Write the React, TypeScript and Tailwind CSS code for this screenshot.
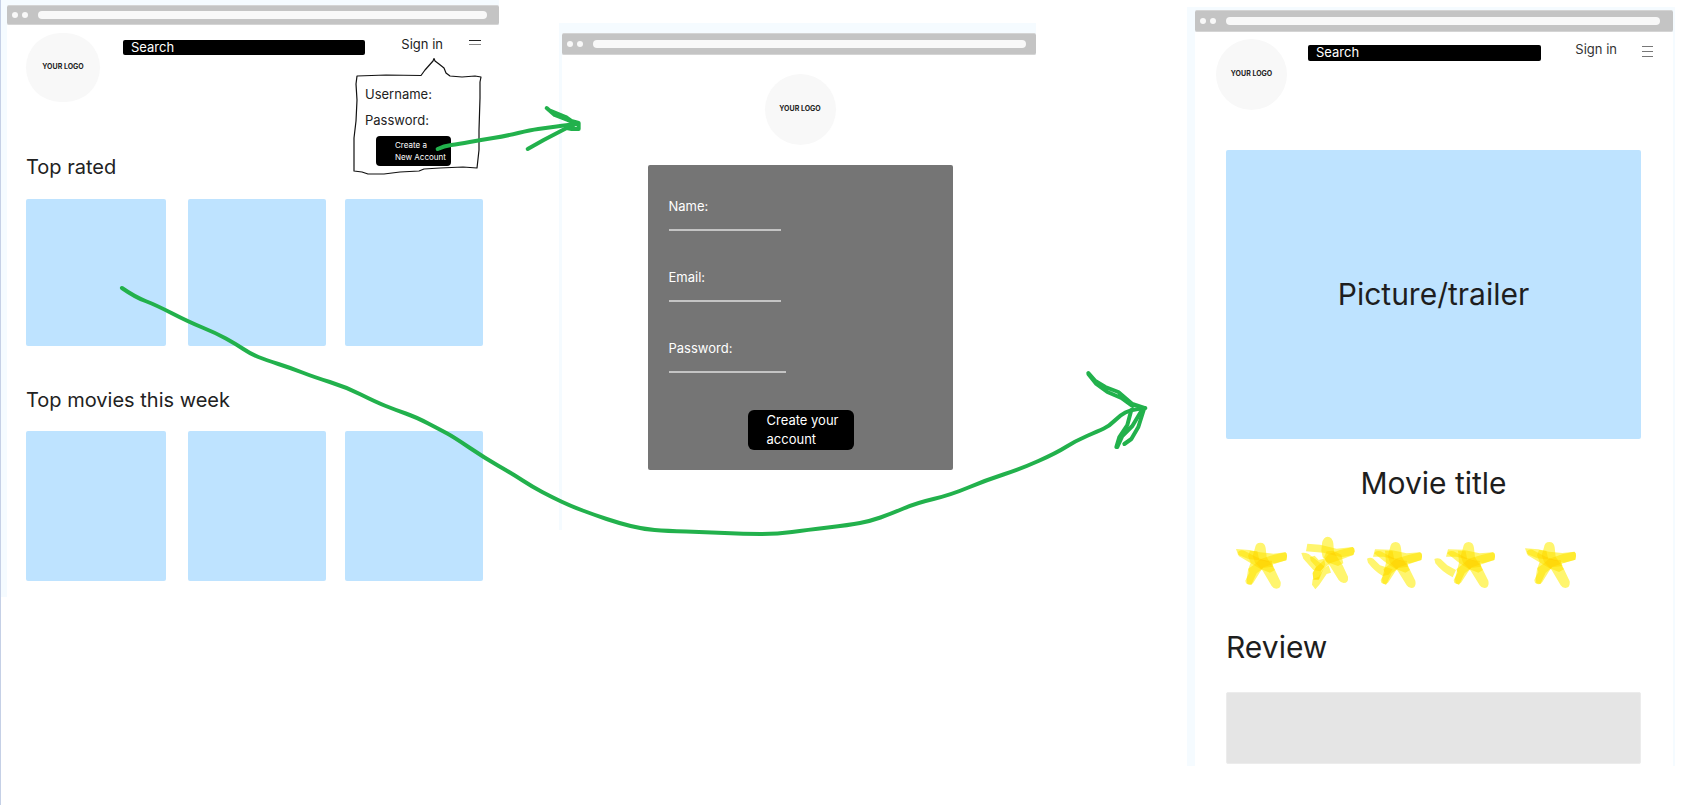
import React from "react";

const tile = "block rounded-xs bg-[#bee3ff]";

function BrowserBar({ className }: { className: string }) {
  return (
    <div className={`flex items-center rounded-xs border-y border-[#d4d4d4] bg-[#c4c4c4] ${className}`}>
      <span className="mr-1 size-1.5 rounded-full bg-[#f8f8f8]" />
      <span className="size-1.5 rounded-full bg-[#f8f8f8]" />
      <span className="ml-2.5 h-2 grow rounded-full bg-[#f8f8f8]" />
    </div>
  );
}

function Logo({ className }: { className: string }) {
  return (
    <a
      href="#home"
      className={`flex shrink-0 items-center justify-center rounded-full bg-[#f8f8f8] text-[7px] font-bold whitespace-nowrap text-[#222] ${className}`}
    >
      YOUR LOGO
    </a>
  );
}

function SignInBubble() {
  return (
    <div className="absolute top-8 right-4 h-[118px] w-[130px] pt-6 pl-3">
      <svg
        viewBox="353 57 130 118"
        className="pointer-events-none absolute inset-0 size-full"
        fill="none"
        stroke="#111"
        strokeWidth="1.2"
        strokeLinejoin="round"
      >
        <path d="M357 76L386 75L421 75.500L425 70L433 61L434 58.500L435 61L439 64L444 68L446 73L450 76L462 77L475 76L481 77L480 82L480 98L479 130L479 150L477 168L463 167L440 168L424 169L419 171L400 172L384 174L368 174L362 172L354 171L354 160L354 138L356 121L357 100L356 84Z" />
      </svg>
      <form className="relative text-[13px] leading-[26px] text-[#222]">
        <div className="flex">
          <label htmlFor="username">Username:</label>
          <input id="username" className="w-8 outline-none" />
        </div>
        <div className="flex">
          <label htmlFor="password">Password:</label>
          <input id="password" type="password" className="w-8 outline-none" />
        </div>
        <button
          type="button"
          className="mt-[3px] ml-[11px] block h-[30px] w-[75px] rounded-sm bg-black pl-[19px] text-left text-[8px] leading-[12px] whitespace-nowrap text-white"
        >
          Create a
          <br />
          New Account
        </button>
      </form>
    </div>
  );
}

function HomeFrame() {
  return (
    <section className="col-start-1 bg-[#f5fbff] pt-[5px] pl-1.5">
      <BrowserBar className="h-5 pr-3 pl-[5px]" />
      <div className="relative h-[572px] bg-white pr-4 pl-[19px]">
        <header className="flex h-[120px] items-start pt-2">
          <Logo className="h-[69px] w-[74px]" />
          <input
            aria-label="Search"
            placeholder="Search"
            className="mt-[7px] ml-[23px] h-[15px] min-w-0 grow rounded-xs bg-black px-2 text-[13px] leading-[15px] text-white placeholder:text-white"
          />
          <button className="mt-1 ml-9 text-[13px] leading-[14px] text-[#222]">Sign in</button>
          <button aria-label="Menu" className="mt-[7px] mr-0.5 ml-[26px] flex w-3 flex-col gap-[3px]">
            <span className="h-px w-full bg-[#222]" />
            <span className="h-px w-full bg-[#888]" />
          </button>
        </header>
        <SignInBubble />
        <h2 className="h-[54px] pt-[9px] text-[20px] leading-[26px] text-[#222]">Top rated</h2>
        <div className="grid h-[147px] grid-cols-[140fr_22fr_138fr_19fr_138fr]">
          <a href="#movie" aria-label="Top rated 1" className={tile} />
          <a href="#movie" aria-label="Top rated 2" className={`col-start-3 ${tile}`} />
          <a href="#movie" aria-label="Top rated 3" className={`col-start-5 ${tile}`} />
        </div>
        <h2 className="h-[85px] pt-[41px] text-[20px] leading-[26px] text-[#222]">Top movies this week</h2>
        <div className="grid h-[150px] grid-cols-[140fr_22fr_138fr_19fr_138fr]">
          <a href="#movie" aria-label="This week 1" className={tile} />
          <a href="#movie" aria-label="This week 2" className={`col-start-3 ${tile}`} />
          <a href="#movie" aria-label="This week 3" className={`col-start-5 ${tile}`} />
        </div>
      </div>
    </section>
  );
}

function Field({ id, label, type, width }: { id: string; label: string; type: string; width: string }) {
  return (
    <div className="h-[71px]">
      <label htmlFor={id} className="block text-[13px] leading-[18px]">
        {label}
      </label>
      <input id={id} type={type} className={`block h-4 border-b-2 border-[#c4c4c4] outline-none ${width}`} />
    </div>
  );
}

function SignUpFrame() {
  return (
    <section className="col-start-3 mt-[23px] bg-[#f5fbff] pt-2.5 pl-[3px]">
      <BrowserBar className="h-[22px] pr-2.5 pl-[5px]" />
      <div className="h-[475px] bg-white pt-[19px] pl-0.5">
        <Logo className="mx-auto size-[71px]" />
        <form className="mx-auto mt-5 h-[305px] w-[305px] rounded-xs bg-[#757575] pt-8 pl-[21px] text-white">
          <Field id="name" label="Name:" type="text" width="w-28" />
          <Field id="email" label="Email:" type="email" width="w-28" />
          <Field id="new-password" label="Password:" type="password" width="w-[117px]" />
          <button
            type="button"
            className="ml-[79px] block h-10 w-[106px] rounded-md bg-black pl-[19px] text-left text-[13px] leading-[19px] text-white"
          >
            Create your
            <br />
            account
          </button>
        </form>
      </div>
    </section>
  );
}

function PlainStar() {
  return (
    <>
      <path d="M78 87L118 90L150 97L190 101L226 97Q232 100 231 110L229 121L195 130L160 122L115 117L84 104Z" />
      <path d="M135 84Q137 68 151 68Q165 68 167 84L170 112L195 150L212 186Q214 206 199 206Q190 206 185 198L158 152L135 128L128 108Z" />
      <path d="M226 97Q232 100 231 110L229 121L195 131L160 142L150 156L130 188Q122 200 108 190L106 182L118 158L115 146L135 132L150 118L192 104Z" />
      <path d="M84 96Q92 86 106 94L140 112L185 128L195 150L180 158L150 146L120 128L86 108Z" />
      <path d="M120 92L142 94L148 120L185 122L190 140L160 144L140 160L124 194L112 192L110 176L114 150L122 128L114 108Z" />
    </>
  );
}

function DetachedArmStar() {
  return (
    <>
      <path d="M495 88L540 89L590 100L630 97Q637 100 636 110L634 120L600 130L560 120L520 110L489 110Z" />
      <path d="M540 84Q542 66 557 66Q571 66 573 84L576 112L600 150L616 182Q620 204 604 204Q595 204 590 196L563 152L540 128L533 108Z" />
      <path d="M630 97Q637 100 636 110L634 120L600 131L566 142L555 156L534 188Q526 196 514 188L512 180L524 158L520 148L540 132L556 116L598 104Z" />
      <path d="M492 100Q498 90 512 94L546 112L590 128L600 150L586 158L556 146L530 130Z" />
      <path d="M525 92L548 94L553 120L590 122L595 140L565 144L545 160L528 195L518 190L516 176L520 160L528 128Z" />
    </>
  );
}

function Stars() {
  return (
    <svg
      role="img"
      aria-label="Five stars"
      viewBox="48 30 1245 180"
      preserveAspectRatio="xMinYMid meet"
      className="isolate block h-[60px] w-full [&_path]:mix-blend-multiply"
      fill="#fff56e"
    >
      <PlainStar />
      <path d="M292 71L330 74L380 86L428 81Q434 84 434 94L430 105L395 112L340 98L288 94Z" />
      <path d="M336 70Q340 50 353 50Q367 51 370 70L372 96L398 136L414 170Q416 189 401 189Q392 188 386 180L360 138L338 112L334 92Z" />
      <path d="M428 81Q434 84 434 94L430 105L396 118L360 130L340 148L328 178L310 180L308 160L318 142L340 122L356 102L390 90Z" />
      <path d="M274 99Q284 97 296 102L330 128L344 140L330 154L310 150L280 116Z" />
      <path d="M300 112L314 107L326 120L342 116L346 134L334 152L326 180L310 178L308 158L318 140L302 122Z" />
      <path d="M308 178L326 170L340 146L356 136L363 158L350 162L328 194L316 208L306 194Z" />
      <path d="M350 94L370 92L394 104L400 130L384 138L350 126L342 112Z" />
      <DetachedArmStar />
      <path d="M471 116Q480 111 490 116L510 136L548 148L536 164L518 168Q492 152 474 128Z" />
      <g transform="translate(219 0)">
        <DetachedArmStar />
      </g>
      <path d="M673 117Q682 112 692 117L712 136L738 150L728 172Q696 156 676 130Z" />
      <g transform="translate(867 -2)">
        <PlainStar />
      </g>
    </svg>
  );
}

function MovieFrame() {
  return (
    <section className="col-start-5 mt-[7px] bg-[#f5fbff] pt-[3px] pr-0.5 pl-2">
      <BrowserBar className="h-[22px] pr-[13px] pl-[5px]" />
      <div className="h-[734px] bg-white pr-8 pl-[21px] text-[#1e1e1e]">
        <header className="-mr-3 flex h-[118px] items-start pt-[7px]">
          <Logo className="size-[71px]" />
          <input
            aria-label="Search movies"
            placeholder="Search"
            className="mt-1.5 ml-[21px] h-4 min-w-0 grow rounded-xs bg-black px-2 pb-0.5 text-[13px] leading-[14px] text-white placeholder:text-white"
          />
          <button className="mt-[3px] ml-[34px] text-[13px] leading-[14px] text-[#333]">Sign in</button>
          <button aria-label="Menu" className="mt-[7px] ml-[25px] flex w-[11px] flex-col gap-1">
            <span className="h-px w-full bg-[#777]" />
            <span className="h-px w-full bg-[#777]" />
            <span className="h-px w-full bg-[#777]" />
          </button>
        </header>
        <div className="pl-2.5">
          <div className="flex h-[289px] items-center justify-center rounded-xs bg-[#bee3ff] text-[30px]">
            Picture/trailer
          </div>
          <h1 className="mt-6 text-center text-[30px] leading-10">Movie title</h1>
          <div className="mt-[27px]">
            <Stars />
          </div>
          <label htmlFor="review" className="mt-[37px] block text-[30px] leading-10">
            Review
          </label>
          <textarea
            id="review"
            className="mt-[25px] block h-[72px] w-full resize-none rounded-xs border border-[#ececec] bg-[#e5e5e5] outline-none"
          />
        </div>
      </div>
    </section>
  );
}

type Point = [number, number];

/** Joins the points into one pen stroke, rounding each corner through the segment midpoints. */
function penStroke(points: Point[]): string {
  const [first, ...rest] = points;
  let d = `M${first[0]} ${first[1]}`;
  rest.forEach(([x, y], i) => {
    const next = rest[i + 1];
    d += next ? `Q${x} ${y} ${(x + next[0]) / 2} ${(y + next[1]) / 2}` : `L${x} ${y}`;
  });
  return d;
}

const accountArrow: Point[] = [
  [437, 149], [443, 146], [458, 144], [480, 140], [505, 136], [530, 130], [545, 128], [567, 125], [577, 124],
];

const movieArrow: Point[] = [
  [121, 288], [134, 297], [155, 305], [188, 322], [215, 333], [235, 344], [250, 354], [265, 360], [290, 368],
  [313, 377], [345, 387], [375, 402], [395, 410], [415, 417], [440, 430], [453, 437], [484, 458], [512, 474],
  [532, 487], [551, 497], [570, 506], [594, 515], [618, 523], [642, 529], [666, 531], [705, 532], [743, 534],
  [777, 534], [806, 530], [849, 525], [870, 521], [890, 514], [916, 503], [950, 495], [986, 480], [1020, 469],
  [1056, 453], [1075, 441], [1098, 431], [1109, 426], [1120, 415], [1130, 410], [1145, 408],
];

function FlowArrows() {
  return (
    <svg
      viewBox="0 0 1689 805"
      preserveAspectRatio="none"
      className="pointer-events-none absolute top-0 left-0 h-[805px] w-full"
      fill="none"
      stroke="#22b14c"
      strokeWidth="4"
      strokeLinecap="round"
      strokeLinejoin="round"
    >
      <path d={penStroke(accountArrow)} />
      <path d="M546 108L554 115L567 120L578 123L578 129L571 129L566 128L543 140L527 149M548 110L565 117L572 122L566 127L573 125" />
      <path d={penStroke(movieArrow)} />
      <path d="M1088 373L1095 381L1105 387L1118 392L1132 404L1144 408L1138 427L1131 439L1124 444M1088 374L1096 384L1107 392L1121 398L1132 406" />
      <path d="M1131 410L1127 425L1119 437L1116 447M1141 411L1132 426L1122 436L1117 447" />
    </svg>
  );
}

export default function App() {
  return (
    <main className="relative grid min-h-screen grid-cols-[498fr_60fr_477fr_151fr_488fr_14fr] items-start border-l border-[#c5d0e6] bg-white font-[Inter,sans-serif]">
      <HomeFrame />
      <SignUpFrame />
      <MovieFrame />
      <FlowArrows />
    </main>
  );
}
